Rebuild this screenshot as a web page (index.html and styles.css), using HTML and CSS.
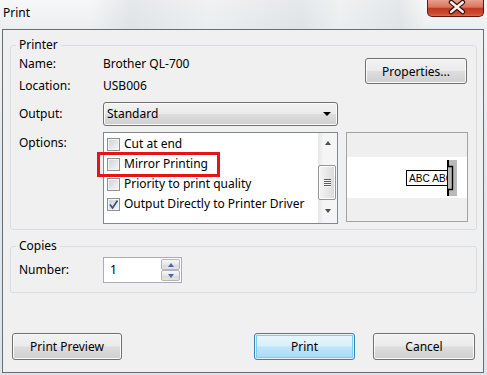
FILE: index.html
```html
<!DOCTYPE html>
<html lang="en">
<head>
  <meta charset="UTF-8" />
  <title>Print</title>
  <link rel="stylesheet" href="styles.css">
</head>
<body>
  <div class="window">
    <div class="titlebar">
      <span class="title">Print</span>
      <button class="close" aria-label="Close">
        <svg width="57" height="16" viewBox="0 0 57 16">
          <path d="M24 2 L36 12 M36 2 L24 12" stroke="#3b1208" stroke-width="5" stroke-linecap="round"/>
          <path d="M24 2 L36 12 M36 2 L24 12" stroke="#f4f4f4" stroke-width="2.6" stroke-linecap="round"/>
        </svg>
      </button>
    </div>

    <div class="dialog">
      <fieldset class="group printer">
        <legend>Printer</legend>
        <div class="printer-grid">
          <span class="label">Name:</span>
          <span class="value">Brother QL-700</span>
          <button class="btn props">Properties...</button>

          <span class="label">Location:</span>
          <span class="value">USB006</span>

          <span class="label output-label">Output:</span>
          <div class="select">Standard<span class="arrow"></span></div>

          <span class="label options-label">Options:</span>
          <div class="listbox">
            <div class="items">
              <div class="item"><span class="check"></span>Cut at end</div>
              <div class="item"><span class="check"></span>Mirror Printing</div>
              <div class="item"><span class="check"></span>Priority to print quality</div>
              <div class="item">
                <span class="check">
                  <svg width="11" height="11" viewBox="0 0 11 11"><path d="M2 5.5 L4.5 9 L9.5 1.5" fill="none" stroke="#3e5383" stroke-width="1.7"/></svg>
                </span>Output Directly to Printer Driver
              </div>
            </div>
            <div class="scrollbar">
              <div class="sb-up"><span class="tri-up"></span></div>
              <div class="sb-track"><div class="thumb"><span class="grip"></span></div></div>
              <div class="sb-down"><span class="tri-down"></span></div>
            </div>
            <div class="highlight"></div>
          </div>

          <div class="preview">
            <svg width="120" height="88" viewBox="0 0 120 88">
              <rect x="0" y="24" width="120" height="41" fill="#ffffff"/>
              <rect x="59.5" y="37.5" width="44" height="15" fill="#ffffff" stroke="#000" stroke-width="1"/>
              <text x="62" y="49" font-family="Liberation Sans, sans-serif" font-size="11" textLength="44" lengthAdjust="spacingAndGlyphs">ABC ABC</text>
              <rect x="101" y="27" width="9" height="36" fill="#b9b9b9"/>
              <rect x="100" y="27" width="2" height="36" fill="#000"/>
              <polyline points="101,33.5 105.5,33.5 105.5,56.5 101,56.5" fill="#b9b9b9" stroke="#000" stroke-width="1.4"/>
            </svg>
          </div>
        </div>
      </fieldset>

      <fieldset class="group copies">
        <legend>Copies</legend>
        <div class="copies-row">
          <span class="label">Number:</span>
          <div class="spin-field">
            <span class="num">1</span>
            <div class="spin">
              <span class="spin-btn"><span class="spin-up"></span></span>
              <span class="spin-btn"><span class="spin-down"></span></span>
            </div>
          </div>
        </div>
      </fieldset>

      <div class="actions">
        <button class="btn preview-btn">Print Preview</button>
        <button class="btn print-btn">Print</button>
        <button class="btn cancel-btn">Cancel</button>
      </div>
    </div>
  </div>
</body>
</html>
```

FILE: styles.css
```css
body {
  margin: 0;
  padding: 0;
  font-family: "Noto Sans", "Liberation Sans", sans-serif;
  font-size: 12px;
  color: #000;
  background: #e4e9ed;
}

.window {
  width: 487px;
  height: 375px;
  display: flex;
  flex-direction: column;
  background: linear-gradient(to bottom, #f3f5f7, #e3e8ec 40%, #dde3e8);
}

.titlebar {
  height: 29px;
  flex-shrink: 0;
  display: flex;
  align-items: flex-start;
  background:
    linear-gradient(to right, transparent 90px, rgba(200, 205, 210, 0.35) 130px, rgba(235, 238, 240, 0.6) 210px, rgba(200, 205, 210, 0.35) 300px, rgba(235, 238, 240, 0.6) 340px, rgba(205, 210, 214, 0.4) 400px, transparent 425px),
    linear-gradient(to bottom, #f6f7f8, #eceff1);
}

.title {
  margin: 5px 0 0 3px;
  line-height: 16px;
  color: #000;
}

.close {
  margin-left: auto;
  margin-right: 3px;
  width: 57px;
  height: 17px;
  padding: 0;
  border: 1px solid #5a1a0f;
  border-top: none;
  border-radius: 0 0 5px 5px;
  background: linear-gradient(to bottom, #e7a08f 0%, #d8745e 45%, #c2391f 52%, #cc4a2e 85%, #dc6a4c 100%);
  display: flex;
  align-items: center;
  justify-content: center;
}

.dialog {
  flex: 1;
  margin: 0 3px 2px 2px;
  border: 1px solid #686d72;
  background: #f0f0f0;
  display: flex;
  flex-direction: column;
  padding: 7px 6px 12px 7px;
}

.group {
  margin: 0;
  border: 1px solid #d5dfe5;
  border-radius: 3px;
  min-width: 0;
}

.group legend {
  padding: 0 3px;
  margin-left: -3px;
  line-height: 16px;
}

.printer {
  padding: 0 8px 5px 8px;
}

.printer-grid {
  display: grid;
  grid-template-columns: 84px 235px 8px 122px;
  grid-template-rows: 22px 22px 29px 98px;
}

.label,
.value {
  line-height: 16px;
  align-self: center;
}

.props {
  grid-column: 3 / 5;
  grid-row: 1 / 3;
  justify-self: end;
  align-self: start;
  margin: 5px 1px 0 0;
  width: 102px;
  height: 26px;
}

.btn {
  font-family: inherit;
  font-size: 12px;
  color: #000;
  padding: 0;
  border: 1px solid #707070;
  border-radius: 3px;
  background: linear-gradient(to bottom, #f2f2f2 0%, #ebebeb 48%, #dddddd 52%, #cfcfcf 100%);
  box-shadow: inset 0 0 0 1px #fbfbfb;
}

.output-label {
  grid-column: 1;
  grid-row: 3;
  align-self: end;
  margin-bottom: 4px;
}

.select {
  grid-column: 2;
  grid-row: 3;
  align-self: end;
  height: 24px;
  box-sizing: border-box;
  border: 1px solid #707070;
  border-radius: 3px;
  background: linear-gradient(to bottom, #f2f2f2 0%, #ebebeb 48%, #dddddd 52%, #cfcfcf 100%);
  box-shadow: inset 0 0 0 1px #fbfbfb;
  padding-left: 3px;
  display: flex;
  align-items: center;
  line-height: 16px;
}

.arrow {
  margin-left: auto;
  margin-right: 6px;
  width: 0;
  height: 0;
  border-left: 4px solid transparent;
  border-right: 4px solid transparent;
  border-top: 4px solid #000;
}

.options-label {
  grid-column: 1;
  grid-row: 4;
  align-self: start;
  padding-top: 9px;
}

.listbox {
  grid-column: 2;
  grid-row: 4;
  margin-top: 6px;
  position: relative;
  display: flex;
  border: 1px solid #828790;
  background: #fff;
}

.items {
  flex: 1;
  padding: 1px 0 0 3px;
}

.item {
  height: 20px;
  display: flex;
  align-items: center;
  gap: 4px;
  white-space: nowrap;
  line-height: 16px;
}

.check {
  width: 13px;
  height: 13px;
  box-sizing: border-box;
  border: 1px solid #8e8f8f;
  background: linear-gradient(135deg, #cdd1d6, #f7f7f7) padding-box;
  box-shadow: inset 0 0 0 1px #f4f4f4;
  display: flex;
  align-items: center;
  justify-content: center;
  flex-shrink: 0;
}

.scrollbar {
  width: 19px;
  display: flex;
  flex-direction: column;
  background: linear-gradient(to right, #e6e6e6, #f5f5f5 30%, #f5f5f5);
}

.sb-up {
  height: 20px;
  display: flex;
  align-items: center;
  justify-content: center;
}

.sb-track {
  flex: 1;
}

.sb-down {
  height: 18px;
  display: flex;
  justify-content: center;
  padding-top: 4px;
  box-sizing: border-box;
}

.tri-up,
.tri-down {
  width: 0;
  height: 0;
  border-left: 3.5px solid transparent;
  border-right: 3.5px solid transparent;
}

.tri-up {
  border-bottom: 4px solid #4d4d4d;
}

.tri-down {
  border-top: 4px solid #4d4d4d;
}

.thumb {
  margin: 12px 1px 0 0;
  height: 35px;
  box-sizing: border-box;
  border: 1px solid #969696;
  border-radius: 2px;
  background: linear-gradient(to right, #f4f4f4, #e8e8e8 50%, #d9d9d9);
  box-shadow: inset 0 0 0 1px #fdfdfd;
  display: flex;
  align-items: center;
  justify-content: center;
}

.grip {
  width: 7px;
  height: 8px;
  background: repeating-linear-gradient(to bottom, #5c5c5c 0, #5c5c5c 1px, #f6f6f6 1px, #f6f6f6 2px);
}

.highlight {
  position: absolute;
  left: -7px;
  top: 19px;
  width: 123px;
  height: 25px;
  box-sizing: border-box;
  border: 3px solid #e5141b;
}

.preview {
  grid-column: 4;
  grid-row: 4;
  align-self: start;
  margin-top: 6px;
  height: 90px;
  box-sizing: border-box;
  border: 1px solid #a3a3a3;
  background: #efefef;
}

.preview svg {
  display: block;
}

.copies {
  margin-top: 8px;
  padding: 3px 8px 9px 8px;
}

.copies-row {
  display: grid;
  grid-template-columns: 84px auto;
  justify-content: start;
  height: 26px;
}

.spin-field {
  width: 79px;
  height: 26px;
  box-sizing: border-box;
  border: 1px solid #abadb3;
  background: #fff;
  display: flex;
}

.num {
  flex: 1;
  padding-left: 6px;
  line-height: 24px;
}

.spin {
  width: 21px;
  padding: 1px;
  box-sizing: border-box;
  display: flex;
  flex-direction: column;
}

.spin-btn {
  flex: 1;
  border: 1px solid #b5b5b5;
  border-radius: 2px;
  background: linear-gradient(to bottom, #f7f7f7, #e7e7e7 50%, #d9d9d9 52%, #e4e4e4);
  display: flex;
  align-items: center;
  justify-content: center;
}

.spin-up,
.spin-down {
  width: 0;
  height: 0;
  border-left: 3.5px solid transparent;
  border-right: 3.5px solid transparent;
}

.spin-up {
  border-bottom: 4px solid #4b68a6;
}

.spin-down {
  border-top: 4px solid #4b68a6;
}

.actions {
  margin: auto 2px 0 2px;
  display: flex;
}

.actions .btn {
  height: 27px;
}

.preview-btn {
  width: 110px;
}

.print-btn {
  width: 101px;
  margin-left: auto;
  border-color: #3c7fb1;
  background: linear-gradient(to bottom, #eaf6fd 0%, #d9f0fc 48%, #bee6fd 52%, #a7d9f5 100%);
  box-shadow: inset 0 0 0 1px #e5f4fc, inset 0 0 0 2px #7ccbf0;
}

.cancel-btn {
  width: 102px;
  margin-left: 18px;
}
```
